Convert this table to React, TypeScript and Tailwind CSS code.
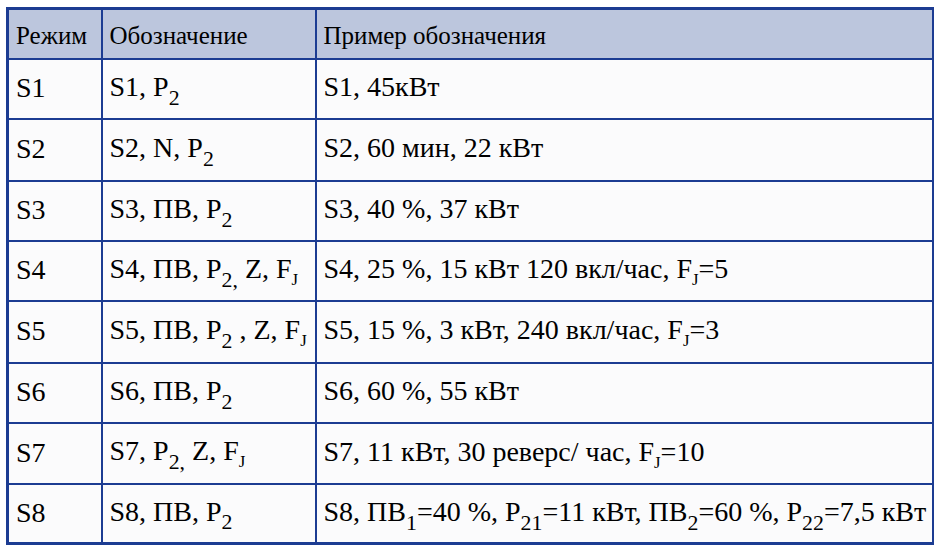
import type { ReactNode } from 'react';

const serif = "font-['Liberation_Serif','Times_New_Roman',serif]!";

// subscript that hangs low, like the old Word tables
const Sub = ({ children, small }: { children: ReactNode; small?: boolean }) => (
    <span
        className={`relative top-[0.4em] leading-none font-['Liberation_Serif','Times_New_Roman',serif]! ${small ? 'text-[0.6em]' : 'text-[0.78em]'}`}
    >
        {children}
    </span>
);

type Row = { mode: string; code: ReactNode; example: ReactNode; h: string };

const rows: Row[] = [
    { mode: 'S1', code: <>S1, P<Sub>2</Sub></>, example: <>S1, 45кВт</>, h: 'h-[60px]' },
    { mode: 'S2', code: <>S2, N, P<Sub>2</Sub></>, example: <>S2, 60 мин, 22 кВт</>, h: 'h-[62px]' },
    { mode: 'S3', code: <>S3, ПВ, P<Sub>2</Sub></>, example: <>S3, 40 %, 37 кВт</>, h: 'h-[60px]' },
    {
        mode: 'S4',
        code: <>S4, ПВ, P<Sub>2,</Sub> Z, F<Sub small>J</Sub></>,
        example: <>S4, 25 %, 15 кВт 120 вкл/час, F<Sub small>J</Sub>=5</>,
        h: 'h-[60px]',
    },
    {
        mode: 'S5',
        code: <>S5, ПВ, P<Sub>2</Sub> , Z, F<Sub small>J</Sub></>,
        example: <>S5, 15 %, 3 кВт, 240 вкл/час, F<Sub small>J</Sub>=3</>,
        h: 'h-[62px]',
    },
    { mode: 'S6', code: <>S6, ПВ, P<Sub>2</Sub></>, example: <>S6, 60 %, 55 кВт</>, h: 'h-[60px]' },
    {
        mode: 'S7',
        code: <>S7, P<Sub>2,</Sub> Z, F<Sub small>J</Sub></>,
        example: <>S7, 11 кВт, 30 реверс/ час, F<Sub small>J</Sub>=10</>,
        h: 'h-[61px]',
    },
    {
        mode: 'S8',
        code: <>S8, ПВ, P<Sub>2</Sub></>,
        example: (
            <>
                S8, ПВ<Sub>1</Sub>=40 %, P<Sub>21</Sub>=11 кВт, ПВ<Sub>2</Sub>=60 %, P<Sub>22</Sub>=7,5 кВт
            </>
        ),
        h: 'h-[60px]',
    },
];

const cell = `border-2 border-[#1c3c92] px-[7px] align-middle whitespace-nowrap ${serif}`;

export default function App() {
    return (
        <div className={`w-[934px] h-[550px] bg-white pt-[7px] pl-[6px] text-black ${serif}`}>
            <table className={`border-collapse border-[3px] border-[#1c3c92] w-[926px] table-fixed ${serif}`}>
                <colgroup>
                    <col className="w-[94px]" />
                    <col className="w-[214px]" />
                    <col className="w-[618px]" />
                </colgroup>
                <thead>
                    <tr className="h-[50px] bg-[#bcc6dd] text-[25px]">
                        <th className={`${cell} text-left font-normal pt-[4px]`}>Режим</th>
                        <th className={`${cell} text-left font-normal pt-[4px]`}>Обозначение</th>
                        <th className={`${cell} text-left font-normal pt-[4px]`}>Пример обозначения</th>
                    </tr>
                </thead>
                <tbody className="text-[28px] leading-[1.15]">
                    {rows.map((r) => (
                        <tr key={r.mode} className={`${r.h} bg-[#fbfbfc]`}>
                            <td className={cell}>{r.mode}</td>
                            <td className={`${cell} pb-[3px]`}>{r.code}</td>
                            <td className={`${cell} pb-[2px]`}>{r.example}</td>
                        </tr>
                    ))}
                </tbody>
            </table>
        </div>
    );
}
